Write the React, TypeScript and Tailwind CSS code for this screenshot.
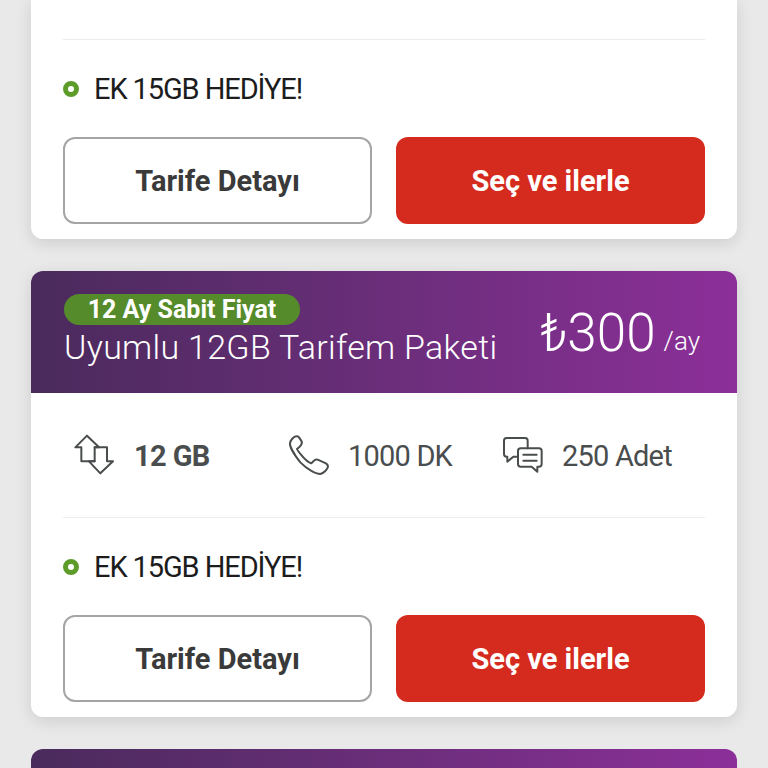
import React from 'react';

const stroke = {
  fill: 'none',
  stroke: '#4a4d4e',
  strokeWidth: 6,
  strokeLinejoin: 'round' as const,
  strokeLinecap: 'round' as const,
};

function DataIcon() {
  return (
    <svg width="42" height="42" viewBox="40 30 126 126" {...stroke}>
      <path d="M105 70 H118 L82 35 L47 70 H65 V112 H105 Z" />
      <path d="M105 70 H142 V112 H160 L122 148 L88 112 H105" />
    </svg>
  );
}

function PhoneIcon() {
  return (
    <svg width="42" height="42" viewBox="20 30 126 126" {...stroke}>
      <path d="M48 37 C40 38 30 48 29 58 C28 66 40 90 60 115 C80 135 105 150 120 150 C130 148 142 135 143 128 C143 122 140 120 137 118 L112 107 C107 105 103 107 100 111 L93 118 C85 115 72 105 62 92 C55 84 52 80 50 75 L58 68 C64 62 66 58 64 52 L56 40 C54 37 51 36 48 37 Z" />
    </svg>
  );
}

function ChatIcon() {
  return (
    <svg width="42" height="42" viewBox="663 35 126 126" {...stroke}>
      <path d="M712 103 H700 L682 118 V103 H680 Q672 103 672 95 V55 Q672 47 680 47 H735 Q743 47 743 55 V78" />
      <path d="M722 78 H777 Q785 78 785 86 V125 Q785 133 777 133 H772 V148 L755 133 H722 Q714 133 714 125 V86 Q714 78 722 78 Z" />
      <path d="M730 97 H770 M730 115 H770" />
    </svg>
  );
}

function Feature({ icon, label, bold, className }: { icon: React.ReactNode; label: string; bold?: boolean; className: string }) {
  return (
    <div className={`flex items-center ${className}`}>
      <div className="w-[42px] h-[42px] shrink-0">{icon}</div>
      <span className={`ml-[19px] pt-[3px] text-[29px] text-[#4a4d4e] whitespace-nowrap ${bold ? 'font-bold tracking-[-0.6px]' : 'font-normal tracking-[-0.8px]'}`}>
        {label}
      </span>
    </div>
  );
}

function CardHeader() {
  return (
    <div className="h-[122px] bg-gradient-to-r from-[#4a2a5c] to-[#8c2f99] pl-[33px] pr-[37px] flex justify-between">
      <div className="pt-[23px]">
        <div className="w-[236px] h-[31px] rounded-full bg-[#558b2a] text-white text-[25px] font-bold leading-[31px] text-center">
          12 Ay Sabit Fiyat
        </div>
        <div className="text-white text-[34px] font-light leading-[44px] whitespace-nowrap tracking-[0.3px]">Uyumlu 12GB Tarifem Paketi</div>
      </div>
      <div className="pt-[30px] flex items-start text-white whitespace-nowrap font-light">
        <span className="text-[53px] leading-[64px]">₺300</span>
        <span className="text-[26px] leading-[32px] ml-[8px] mt-[24px]">/ay</span>
      </div>
    </div>
  );
}

function CardFooter() {
  return (
    <>
      <div className="h-[97px] flex items-center">
        <div className="w-[16px] h-[16px] rounded-full border-[5px] border-[#5e9c2a]" />
        <span className="ml-[15px] pt-[2px] text-[29px] text-[#1c1c1c] tracking-[-1.1px]">EK 15GB HEDİYE!</span>
      </div>
      <div className="grid grid-cols-2 gap-[24px] pb-[15px]">
        <button className="h-[87px] pt-[2px] rounded-[12px] border-2 border-[#a5a5a5] bg-white text-[#3a3a3a] text-[29px] font-bold">
          Tarife Detayı
        </button>
        <button className="h-[87px] pt-[2px] rounded-[12px] bg-[#d52b1e] text-white text-[29px] font-bold">
          Seç ve ilerle
        </button>
      </div>
    </>
  );
}

export default function App() {
  const card = 'rounded-[12px] bg-white shadow-[0_4px_16px_rgba(0,0,0,0.12)] overflow-hidden';

  return (
    <div className="h-[768px] overflow-hidden bg-[#e9e9e9] font-['Roboto',sans-serif]">
      <div className="px-[31px] flex flex-col gap-[32px]">
        {/* Previous plan, scrolled past the top of the screen */}
        <div className="rounded-b-[12px] bg-white shadow-[0_4px_16px_rgba(0,0,0,0.12)] px-[32px] pt-[39px]">
          <div className="border-t border-[#ececec]" />
          <CardFooter />
        </div>

        <div className={card}>
          <CardHeader />
          <div className="px-[32px]">
            <div className="h-[125px] flex items-center border-b border-[#ececec]">
              <Feature icon={<DataIcon />} label="12 GB" bold className="w-[224px] pl-[10px]" />
              <Feature icon={<PhoneIcon />} label="1000 DK" className="w-[214px]" />
              <Feature icon={<ChatIcon />} label="250 Adet" className="" />
            </div>
            <CardFooter />
          </div>
        </div>

        {/* Next plan, only the top edge of its header is on screen */}
        <div className="h-[122px] rounded-t-[12px] bg-gradient-to-r from-[#4a2a5c] to-[#8c2f99]" />
      </div>
    </div>
  );
}
